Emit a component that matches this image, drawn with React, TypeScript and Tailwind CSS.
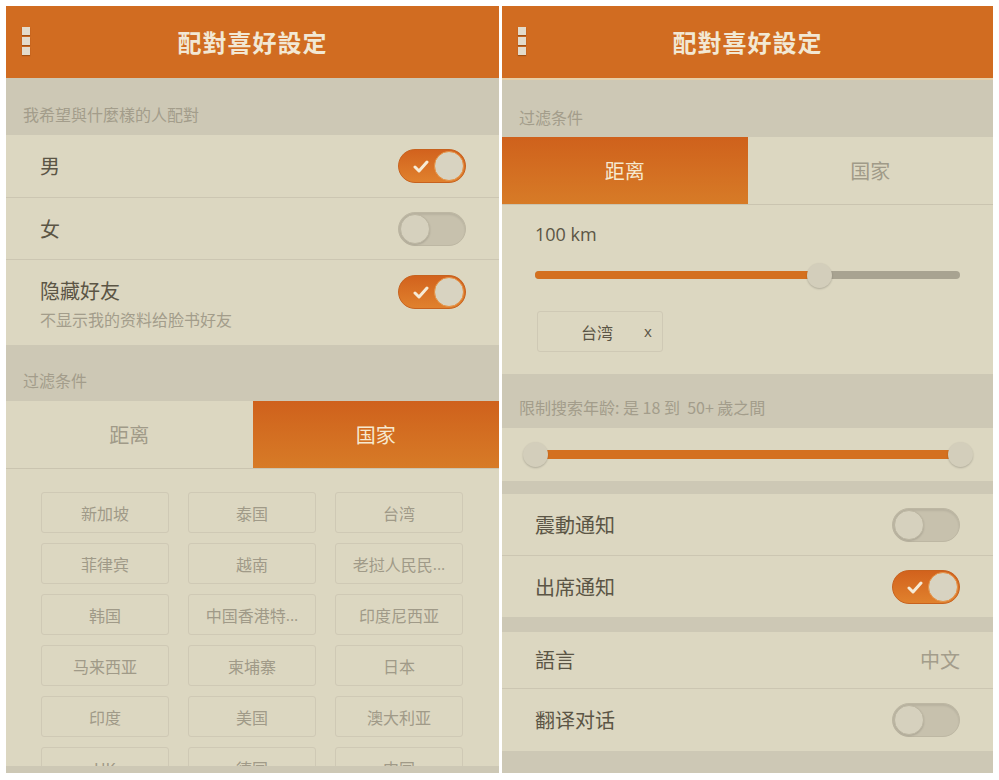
import React from 'react';

const FONT = { fontFamily: '"Noto Sans CJK SC", "Noto Sans", sans-serif' };
const LATIN = { fontFamily: '"Open Sans", "Noto Sans", sans-serif' };

function MenuDots() {
  return (
    <div className="flex flex-col gap-[2px]">
      {[0, 1, 2].map(i => (
        <div key={i} className="w-[8px] h-[8px] bg-[#E3DBCB] shadow-[0_1px_1px_rgba(90,40,0,0.4)]" />
      ))}
    </div>
  );
}

function Header() {
  return (
    <div className="relative h-[72px] shrink-0 bg-[#D16C21] flex items-center justify-center">
      <div className="absolute left-[16px] top-[21px]">
        <MenuDots />
      </div>
      <span className="text-[24px] font-bold text-[#F2E8D4] tracking-[1px]">配對喜好設定</span>
    </div>
  );
}

function Toggle({ on }: { on: boolean }) {
  if (on) {
    return (
      <div className="relative w-[68px] h-[34px] rounded-full bg-gradient-to-b from-[#D2621D] to-[#E0812D] border border-[#C7621E] flex items-center justify-end pr-[1px] shrink-0">
        <svg className="absolute left-[14px] top-[10px]" width="16" height="13" viewBox="0 0 16 13">
          <path d="M2 7 L6 11 L14 2" fill="none" stroke="#F6EBD6" strokeWidth="3" strokeLinecap="round" strokeLinejoin="round" />
        </svg>
        <div className="w-[30px] h-[30px] rounded-full bg-[#D8D3C1] border border-[#E59143]" />
      </div>
    );
  }
  return (
    <div className="w-[68px] h-[34px] rounded-full bg-[#C7C1AD] border border-[#BDB7A3] shadow-[inset_0_2px_2px_rgba(0,0,0,0.08)] flex items-center pl-[1px] shrink-0">
      <div className="w-[30px] h-[30px] rounded-full bg-[#D6D1BE] border border-[#BCB6A2] shadow-[0_1px_2px_rgba(0,0,0,0.15)]" />
    </div>
  );
}

function SectionTitle({ children, h, pt }: { children: React.ReactNode; h: string; pt: string }) {
  return (
    <div className={`shrink-0 bg-[#CDC8B5] pl-[17px] ${h} ${pt}`}>
      <span className="text-[16px] leading-[20px] text-[#A39D8B] whitespace-pre">{children}</span>
    </div>
  );
}

function Tabs({ active }: { active: 0 | 1 }) {
  const labels = ['距离', '国家'];
  return (
    <div className="h-[68px] shrink-0 flex border-b border-[#CAC4B0] bg-[#DCD7C1]">
      {labels.map((l, i) => (
        <div
          key={l}
          className={
            i === active
              ? 'flex-1 flex items-center justify-center bg-gradient-to-b from-[#CF611C] to-[#D77B27] text-[#F6E9D0] text-[20px]'
              : 'flex-1 flex items-center justify-center text-[#A09A88] text-[20px]'
          }
        >
          {l}
        </div>
      ))}
    </div>
  );
}

const COUNTRIES: [string, boolean][] = [
  ['新加坡', false], ['泰国', false], ['台湾', false],
  ['菲律宾', false], ['越南', false], ['老挝人民民', true],
  ['韩国', false], ['中国香港特', true], ['印度尼西亚', false],
  ['马来西亚', false], ['柬埔寨', false], ['日本', false],
  ['印度', false], ['美国', false], ['澳大利亚', false],
  ['UK', false], ['德国', false], ['中国', false],
];

function LeftPanel() {
  return (
    <div className="w-[493px] h-[767px] flex flex-col bg-[#DCD7C1] overflow-hidden">
      <Header />
      <SectionTitle h="h-[57px]" pt="pt-[24px]">我希望與什麼樣的人配對</SectionTitle>
      <div className="h-[63px] shrink-0 flex items-center justify-between pl-[34px] pr-[33px] border-b border-[#CCC6B2]">
        <span className="text-[20px] text-[#5B5545]">男</span>
        <Toggle on />
      </div>
      <div className="h-[62px] shrink-0 flex items-center justify-between pl-[34px] pr-[33px] border-b border-[#CCC6B2]">
        <span className="text-[20px] text-[#5B5545]">女</span>
        <Toggle on={false} />
      </div>
      <div className="h-[85px] shrink-0 flex justify-between pl-[34px] pr-[33px] pt-[14px]">
        <div className="flex flex-col pt-[2px]">
          <span className="text-[20px] leading-[30px] text-[#5B5545]">隐藏好友</span>
          <span className="text-[16px] leading-[26px] text-[#A39D8B]">不显示我的资料给脸书好友</span>
        </div>
        <div className="pt-[1px]">
          <Toggle on />
        </div>
      </div>
      <SectionTitle h="h-[56px]" pt="pt-[23px]">过滤条件</SectionTitle>
      <Tabs active={1} />
      <div className="flex-1 overflow-hidden pt-[23px] pl-[35px]">
        <div className="grid grid-cols-[128px_128px_128px] gap-x-[19px] gap-y-[10px]">
          {COUNTRIES.map(([c, cut]) => (
            <div
              key={c}
              className="h-[41px] flex items-center justify-center rounded-[3px] border border-[#CFC9B5] text-[16px] text-[#A09A88]"
            >
              {c}
              {cut && <span style={LATIN}>...</span>}
            </div>
          ))}
        </div>
      </div>
      <div className="h-[7px] shrink-0 bg-[#CDC8B5]" />
    </div>
  );
}

function Thumb() {
  return <div className="w-[25px] h-[25px] rounded-full bg-[#D3CEBB] shadow-[0_1px_2px_rgba(0,0,0,0.2)] shrink-0" />;
}

function RightPanel() {
  return (
    <div className="w-[491px] h-[767px] flex flex-col bg-[#DCD7C1] overflow-hidden">
      <Header />
      <div className="h-[2px] shrink-0 bg-[#E6CFA8]" />
      <SectionTitle h="h-[57px]" pt="pt-[25px]">过滤条件</SectionTitle>
      <Tabs active={0} />
      <div className="h-[169px] shrink-0 flex flex-col pl-[33px] pr-[33px]">
        <span className="pt-[16px] text-[18px] leading-[26px] text-[#5B5545]" style={LATIN}>
          100 km
        </span>
        <div className="relative mt-[16px] h-[24px] flex items-center">
          <div className="w-full h-[8px] rounded-full bg-[#A8A391] flex">
            <div className="w-[284px] h-[8px] rounded-full bg-[#D4701F]" />
          </div>
          <div className="absolute left-[272px] top-0">
            <Thumb />
          </div>
        </div>
        <div className="mt-[12px] ml-[2px] w-[126px] h-[41px] rounded-[3px] border border-[#CFC9B5] flex items-center pl-[43px] text-[16px] text-[#5B5545] mt-[24px]">
          <span>台湾</span>
          <span className="ml-[31px] text-[15px]" style={LATIN}>x</span>
        </div>
      </div>
      <SectionTitle h="h-[54px]" pt="pt-[21px]">{'限制搜索年龄: 是 18 到  50+ 歲之間'}</SectionTitle>
      <div className="h-[53px] shrink-0 flex items-center pl-[21px] pr-[20px]">
        <div className="relative flex-1 h-[25px] flex items-center">
          <div className="absolute left-[12px] right-[12px] h-[9px] bg-[#D4701F]" />
          <div className="relative flex-1 flex justify-between">
            <Thumb />
            <Thumb />
          </div>
        </div>
      </div>
      <div className="h-[13px] shrink-0 bg-[#CDC8B5]" />
      <div className="h-[62px] shrink-0 flex items-center justify-between pl-[33px] pr-[33px] border-b border-[#CCC6B2]">
        <span className="text-[20px] text-[#5B5545]">震動通知</span>
        <Toggle on={false} />
      </div>
      <div className="h-[61px] shrink-0 flex items-center justify-between pl-[33px] pr-[33px]">
        <span className="text-[20px] text-[#5B5545]">出席通知</span>
        <Toggle on />
      </div>
      <div className="h-[15px] shrink-0 bg-[#CDC8B5]" />
      <div className="h-[57px] shrink-0 flex items-center justify-between pl-[33px] pr-[33px] border-b border-[#CCC6B2]">
        <span className="text-[20px] text-[#5B5545]">語言</span>
        <span className="text-[20px] text-[#A39D8B]">中文</span>
      </div>
      <div className="h-[62px] shrink-0 flex items-center justify-between pl-[33px] pr-[33px]">
        <span className="text-[20px] text-[#5B5545]">翻译对话</span>
        <Toggle on={false} />
      </div>
      <div className="flex-1 bg-[#CDC8B5]" />
    </div>
  );
}

export default function App() {
  return (
    <div className="w-[999px] h-[780px] bg-white flex gap-[3px] pt-[6px] pl-[6px]" style={FONT}>
      <LeftPanel />
      <RightPanel />
    </div>
  );
}
